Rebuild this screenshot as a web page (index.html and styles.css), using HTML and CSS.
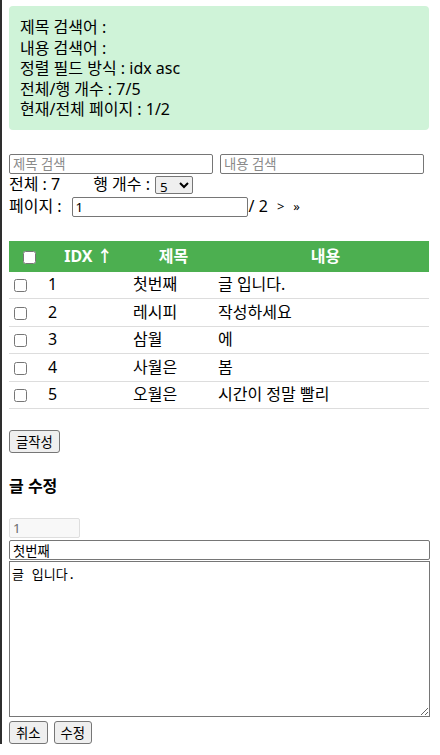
FILE: index.html
```html
<!DOCTYPE html>
<html lang="ko">
<head>
    <meta charset="UTF-8">
    <meta name="viewport" content="width=device-width, initial-scale=1.0">
    <title>게시판</title>
    <link rel="stylesheet" href="styles.css">
</head>
<body>

<div class="page">
    <!-- 검색 상태 -->
    <div class="status">
        <div>제목 검색어 : </div>
        <div>내용 검색어 : </div>
        <div>정렬 필드 방식 : idx asc</div>
        <div>전체/행 개수 : 7/5</div>
        <div>현재/전체 페이지 : 1/2</div>
    </div>

    <!-- 검색 -->
    <div class="search">
        <input type="text" class="search-input" placeholder="제목 검색">
        <input type="text" class="search-input" placeholder="내용 검색">
    </div>

    <div class="line">
        <span>전체 : 7</span>
        <span class="rows-label">행 개수 :</span>
        <select class="rows-select">
            <option>5</option>
            <option>10</option>
        </select>
    </div>

    <div class="line">
        <span>페이지 :</span>
        <input type="text" class="page-input" value="1">
        <span class="page-total">/ 2</span>
        <span class="page-link">&gt;</span>
        <span class="page-link">&raquo;</span>
    </div>

    <!-- 목록 -->
    <table class="list">
        <colgroup>
            <col class="c-check">
            <col class="c-idx">
            <col class="c-title">
            <col class="c-body">
        </colgroup>
        <thead>
            <tr>
                <th><input type="checkbox"></th>
                <th>IDX &#8593;</th>
                <th>제목</th>
                <th>내용</th>
            </tr>
        </thead>
        <tbody>
            <tr><td><input type="checkbox"></td><td>1</td><td>첫번째</td><td>글 입니다.</td></tr>
            <tr><td><input type="checkbox"></td><td>2</td><td>레시피</td><td>작성하세요</td></tr>
            <tr><td><input type="checkbox"></td><td>3</td><td>삼월</td><td>에</td></tr>
            <tr><td><input type="checkbox"></td><td>4</td><td>사월은</td><td>봄</td></tr>
            <tr><td><input type="checkbox"></td><td>5</td><td>오월은</td><td>시간이 정말 빨리</td></tr>
        </tbody>
    </table>

    <button class="btn write-btn">글작성</button>

    <!-- 글 수정 -->
    <h4 class="edit-title">글 수정</h4>
    <div class="edit">
        <input type="text" class="edit-idx" value="1" disabled>
        <input type="text" class="edit-subject" value="첫번째">
        <textarea class="edit-content">글 입니다.</textarea>
        <div class="edit-actions">
            <button class="btn">취소</button>
            <button class="btn">수정</button>
        </div>
    </div>
</div>

</body>
</html>
```

FILE: styles.css
```css
/* General Styling */
html {
    border-left: 2px solid #2e2e2e;
}
body {
    margin: 0;
    padding: 0 0 0 7px;
    font-family: 'Noto Sans', 'Noto Sans CJK KR', sans-serif;
    font-size: 16px;
    line-height: 21px;
    color: #000;
}
.page {
    width: 421px;
}
input, select, textarea, button {
    font-family: 'Noto Sans', 'Noto Sans CJK KR', sans-serif;
    font-size: 13.33px;
    box-sizing: border-box;
    margin: 0;
}
/* Status box */
.status {
    margin-top: 6px;
    width: 420px;
    box-sizing: border-box;
    background-color: #cff3d8;
    border-radius: 4px;
    padding: 11px 11px 10px;
    line-height: 20.5px;
}
/* Search */
.search {
    display: flex;
    gap: 7px;
    margin-top: 24px;
}
.search-input, .page-input, .edit-subject {
    height: 20px;
    border: 1px solid #767676;
    border-radius: 2px;
    padding: 0 3px;
}
.search-input {
    width: 204px;
}
.search-input::placeholder {
    color: #8a8a8a;
}
.line {
    display: flex;
    align-items: center;
    height: 22px;
}
.rows-label {
    margin-left: 33px;
    margin-right: 5px;
}
.rows-select {
    width: 38px;
    height: 18px;
    padding: 0;
    border: 1px solid #767676;
    border-radius: 2px;
    font-size: 13.33px;
}
.page-input {
    width: 176px;
    margin-left: 10px;
}
.page-total {
    margin-left: 1px;
}
.page-link {
    font-size: 13px;
    margin-left: 9px;
}
/* Table */
.list {
    margin-top: 23px;
    width: 420px;
    border-collapse: collapse;
    table-layout: fixed;
}
.c-check { width: 31px; }
.c-idx { width: 85px; }
.c-title { width: 85px; }
.list th {
    background-color: #4caf50;
    color: #fff;
    font-weight: bold;
    height: 31px;
    padding: 0 0 0 12px;
    text-align: center;
}
.list td {
    padding: 0 8px;
    height: 26.5px;
    border-bottom: 1px solid #ddd;
    text-align: left;
}
.list td:first-child {
    padding: 0 0 0 1px;
}
.list th:first-child {
    padding: 0 0 0 8px;
}
.list input[type="checkbox"] {
    width: 13px;
    height: 13px;
    margin: 3px 3px 3px 4px;
    vertical-align: middle;
}
/* Buttons */
.btn {
    height: 23px;
    padding: 0 6px;
    background-color: #efefef;
    border: 1px solid #767676;
    border-radius: 3px;
    color: #000;
}
.write-btn {
    margin-top: 21px;
}
/* Edit */
.edit-title {
    margin: 23px 0 21px;
    font-size: 16px;
    font-weight: bold;
    line-height: 21px;
}
.edit {
    display: flex;
    flex-direction: column;
    align-items: flex-start;
}
.edit-idx {
    width: 71px;
    height: 20px;
    border: 1px solid #dedede;
    border-radius: 2px;
    background-color: #f8f8f8;
    color: #6d6d6d;
    padding: 0 3px;
}
.edit-subject {
    width: 421px;
    margin-top: 2px;
}
.edit-content {
    width: 421px;
    height: 156px;
    margin-top: 1px;
    border: 1px solid #767676;
    padding: 2px;
    font-family: 'DejaVu Sans Mono', 'Noto Sans CJK KR', monospace;
    font-size: 13px;
    resize: vertical;
}
.edit-actions {
    display: flex;
    gap: 6px;
    margin-top: 4px;
}
```
